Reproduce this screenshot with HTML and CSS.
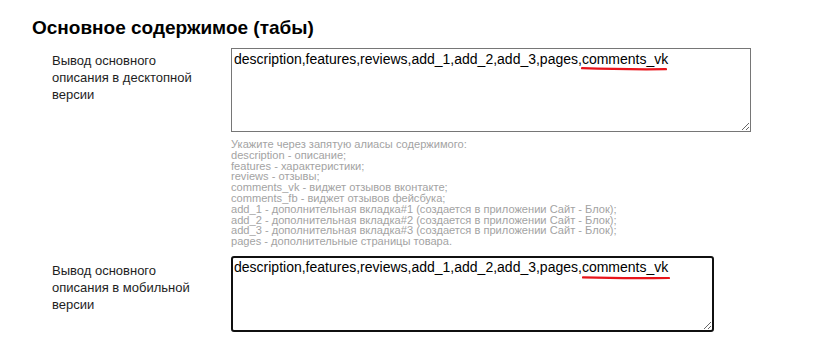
FILE: index.html
```html
<!DOCTYPE html>
<html lang="ru">

<head>
  <meta charset="UTF-8" />
  <meta name="viewport" content="width=device-width, initial-scale=1.0" />
  <title>Основное содержимое</title>
  <link rel="stylesheet" href="styles.css">
</head>

<body>
  <section class="settings">
    <h2 class="settings-title">Основное содержимое (табы)</h2>

    <div class="field-row">
      <label class="field-label" for="tabsDesktop">Вывод основного описания в десктопной версии</label>
      <div class="field-control">
        <div class="mark-wrap">
          <textarea id="tabsDesktop" class="tabs-input tabs-desktop">description,features,reviews,add_1,add_2,add_3,pages,comments_vk</textarea>
          <svg class="mark mark-desktop" width="86" height="5" viewBox="0 0 86 5">
            <path d="M1 2.2 Q 40 3.6 85 3.2" stroke="#e8141b" stroke-width="2.2" fill="none" stroke-linecap="round" />
          </svg>
        </div>
        <div class="field-hint">
          Укажите через запятую алиасы содержимого:<br>
          description - описание;<br>
          features - характеристики;<br>
          reviews - отзывы;<br>
          comments_vk - виджет отзывов вконтакте;<br>
          comments_fb - виджет отзывов фейсбука;<br>
          add_1 - дополнительная вкладка#1 (создается в приложении Сайт - Блок);<br>
          add_2 - дополнительная вкладка#2 (создается в приложении Сайт - Блок);<br>
          add_3 - дополнительная вкладка#3 (создается в приложении Сайт - Блок);<br>
          pages - дополнительные страницы товара.
        </div>
      </div>
    </div>

    <div class="field-row field-row-mobile">
      <label class="field-label" for="tabsMobile">Вывод основного описания в мобильной версии</label>
      <div class="field-control">
        <div class="mark-wrap">
          <textarea id="tabsMobile" class="tabs-input tabs-mobile">description,features,reviews,add_1,add_2,add_3,pages,comments_vk</textarea>
          <svg class="mark mark-mobile" width="88" height="5" viewBox="0 0 88 5">
            <path d="M1 2.4 Q 40 3.6 87 3" stroke="#e8141b" stroke-width="2.2" fill="none" stroke-linecap="round" />
          </svg>
        </div>
      </div>
    </div>
  </section>
</body>

</html>
```

FILE: styles.css
```css
* {
  box-sizing: border-box;
}

body {
  margin: 0;
  font-family: "Liberation Sans", Arial, sans-serif;
  background: #ffffff;
  color: #000000;
}

.settings {
  padding: 17px 0 0 32px;
}

.settings-title {
  margin: 0 0 9px;
  font-size: 19px;
  font-weight: bold;
  line-height: 22px;
}

.field-row {
  display: grid;
  grid-template-columns: 179px auto;
  padding-left: 20px;
}

.field-row-mobile {
  margin-top: 9px;
}

.field-label {
  max-width: 150px;
  padding-top: 4px;
  font-size: 13px;
  line-height: 17px;
  color: #1e1e1e;
}

.field-row-mobile .field-label {
  padding-top: 6px;
}

.mark-wrap {
  position: relative;
  width: max-content;
}

.tabs-input {
  display: block;
  margin: 0;
  font-family: "Liberation Sans", Arial, sans-serif;
  font-size: 14px;
  color: #000000;
  resize: both;
}

.tabs-desktop {
  width: 520px;
  height: 84px;
  padding: 2px;
  border: 1px solid #767676;
  border-radius: 0;
}

.tabs-mobile {
  width: 483px;
  height: 76px;
  padding: 1px;
  border: 2px solid #101010;
  border-radius: 3px;
  outline: none;
}

.mark {
  position: absolute;
  pointer-events: none;
}

.mark-desktop {
  left: 350px;
  top: 18px;
}

.mark-mobile {
  left: 351px;
  top: 19px;
}

.field-hint {
  margin-top: 7px;
  font-size: 11.1px;
  line-height: 10.8px;
  color: #a3a3a3;
}
```
